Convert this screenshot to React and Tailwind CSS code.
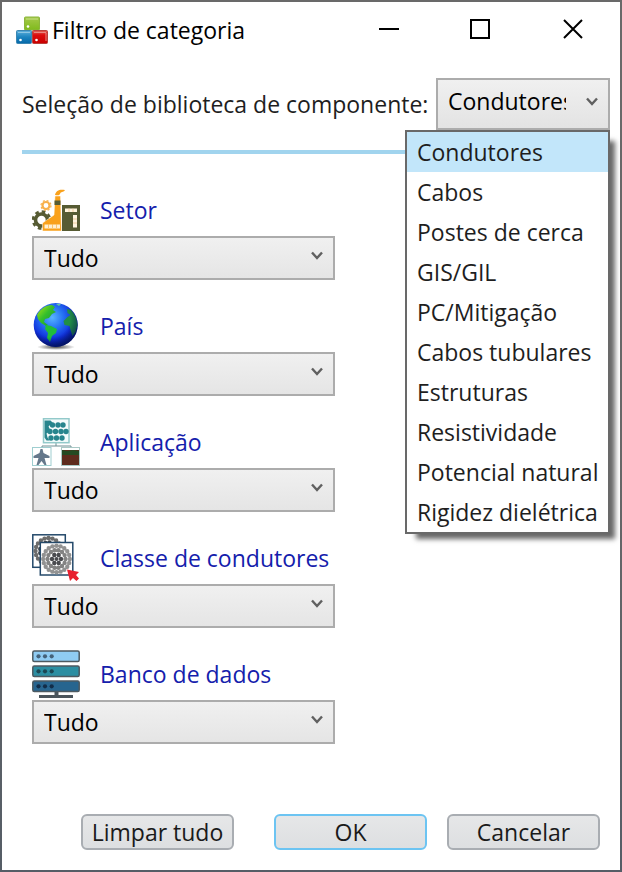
import { useState } from 'react';

const libraries = [
  'Condutores',
  'Cabos',
  'Postes de cerca',
  'GIS/GIL',
  'PC/Mitigação',
  'Cabos tubulares',
  'Estruturas',
  'Resistividade',
  'Potencial natural',
  'Rigidez dielétrica',
];

function BlocksLogo() {
  return (
    <svg className="h-8 w-8 shrink-0" viewBox="0 0 32 32" aria-hidden="true">
      <defs>
        <linearGradient id="lg" x2="0" y2="1">
          <stop stopColor="#a5c94a" />
          <stop offset="1" stopColor="#7fba1c" />
        </linearGradient>
        <linearGradient id="lb" x2="0" y2="1">
          <stop stopColor="#5fb0dc" />
          <stop offset="0.5" stopColor="#1c84c0" />
          <stop offset="1" stopColor="#0668a8" />
        </linearGradient>
        <linearGradient id="lr" x2="0" y2="1">
          <stop stopColor="#e0655a" />
          <stop offset="0.35" stopColor="#dc0d0d" />
          <stop offset="1" stopColor="#c80000" />
        </linearGradient>
      </defs>
      <rect x="8.5" y="3" width="15" height="13" rx="1" fill="url(#lg)" stroke="#8bb53c" />
      <path d="M10 5h12" stroke="#c9df8c" />
      <rect x="0.5" y="16.5" width="15" height="13" rx="1" fill="url(#lb)" stroke="#3b86b2" />
      <path d="M2 18.500h12" stroke="#8cc6e4" />
      <rect x="16.500" y="16.5" width="15" height="13" rx="1" fill="url(#lr)" stroke="#b8403a" />
      <path d="M18 18.500h12M30 19v8" stroke="#e88a82" />
      <g fill="#fff">
        <circle cx="12" cy="12.500" r="1.300" />
        <circle cx="4.500" cy="26" r="1.300" />
        <circle cx="20.500" cy="26" r="1.300" />
      </g>
    </svg>
  );
}

function FactoryIcon() {
  return (
    <svg className="h-12 w-12" viewBox="0 0 48 48" aria-hidden="true">
      <circle cx="14" cy="19.500" r="3.500" fill="none" stroke="#f8b04a" strokeWidth="2.200" />
      <circle cx="14" cy="19.500" r="5" fill="none" stroke="#f8b04a" strokeWidth="1.200" strokeDasharray="2 1.930" />
      <circle cx="9.500" cy="34" r="6" fill="none" stroke="#565b33" strokeWidth="3.600" />
      <circle cx="9.500" cy="34" r="8.500" fill="none" stroke="#565b33" strokeWidth="2.600" strokeDasharray="3.600 3.070" />
      <path d="M10.500 45V37l11.500-8 1-19h5.500l1 35z" fill="#f9a11b" stroke="#fff" strokeWidth="0.500" />
      <path d="M22.500 14.500h6V19h-6z" fill="#565b33" />
      <path d="M23 9c1-5 5-6 10-5-2 3-4 1-5 4-1 2-3 1-5 1z" fill="#f9a11b" />
      <path d="M30 19h18v26H30z" fill="#565b33" />
      <path d="M33 22.500h12V26H33zM41 29h4v12.500h-4z" fill="#fff4df" />
      <path d="M37 22.500v3.500M41 22.500v3.500M41 33h4M41 37h4" stroke="#ecc690" strokeWidth="0.800" />
      <path d="M12.500 38.500h15.500V42.500H12.500z" fill="#fff0d2" />
      <path d="M16.500 38v4M20.500 38v4M24.500 38v4" stroke="#f9b957" strokeWidth="0.800" />
    </svg>
  );
}

function GlobeIcon() {
  return (
    <svg className="h-12 w-12" viewBox="0 0 48 48" aria-hidden="true">
      <defs>
        <radialGradient id="sea" cx="0.420" cy="0.330" r="0.700">
          <stop stopColor="#58b4ff" />
          <stop offset="0.350" stopColor="#2674f4" />
          <stop offset="0.700" stopColor="#102fdc" />
          <stop offset="1" stopColor="#061378" />
        </radialGradient>
        <radialGradient id="shade" cx="0.400" cy="0.350" r="0.650">
          <stop offset="0.650" stopColor="#001050" stopOpacity="0" />
          <stop offset="1" stopColor="#001050" stopOpacity="0.600" />
        </radialGradient>
        <radialGradient id="floor">
          <stop stopColor="#333" stopOpacity="0.900" />
          <stop offset="1" stopColor="#333" stopOpacity="0" />
        </radialGradient>
        <linearGradient id="land" x2="1" y2="1">
          <stop stopColor="#b6e813" />
          <stop offset="0.450" stopColor="#35bf2c" />
          <stop offset="1" stopColor="#108e35" />
        </linearGradient>
      </defs>
      <ellipse cx="24" cy="45" rx="19" ry="3" fill="url(#floor)" />
      <circle cx="23.700" cy="23" r="22" fill="url(#sea)" />
      <path d="M5 13C8 7 14 3 20 3l3 2-2 3 3 2-4 2-3 4-4 1-1 3 4 3-2 1-5-3-3-4z" fill="url(#land)" />
      <path d="M14 23l5 1 6 3-1 4-4 3-2 6-3-4 1-5-3-4z" fill="#20bd3b" />
      <path d="M35 7l4 1c4 4 6 9 6.500 15l-2 7-3 4-2-6-1-4-5-1-1-4 4-4 3-2-3-2z" fill="#218f45" />
      <path d="M24 2l5 0-2 2z" fill="#5fc6a0" />
      <circle cx="23.700" cy="23" r="22" fill="url(#shade)" />
    </svg>
  );
}

function ApplicationIcon() {
  const dots = [
    [20.500, 7], [26, 7], [31, 7],
    [18, 13.500], [23.500, 13.500], [29, 13.500], [34, 13.500],
    [19, 20], [24.500, 20], [30, 20],
  ];
  return (
    <svg className="h-12 w-12" viewBox="0 0 48 48" aria-hidden="true">
      <path d="M24 25v3M10 31v-3h29v3" fill="none" stroke="#6f8e93" />
      <rect x="11.500" y="0.700" width="25.500" height="24" fill="#f3fbfb" stroke="#93c9ca" strokeWidth="1.500" />
      <path d="M12.500 2.500h6l2 2-4 4 2 4-4 3 1 4 2 3h-3l-2-3z" fill="#27858d" />
      {dots.map(([x, y]) => (
        <circle key={`${x}-${y}`} cx={x} cy={y} r="2.700" fill="#27858d" />
      ))}
      <rect x="0.500" y="29.500" width="18.500" height="18" fill="#fff" stroke="#9fced0" />
      <path d="M8.500 31h2l1 4 6 3v2h-5l2 7h-2l-3-4-3 4h-2l2-7h-5v-2l6-3z" fill="#65788b" />
      <rect x="29.500" y="29.500" width="18" height="18" fill="#5e2b1d" stroke="#a9c9c6" />
      <path d="M30 30h17v2H30z" fill="#fff" />
      <path d="M30 32l5 1 6-1 6 1v4H30z" fill="#244a22" />
    </svg>
  );
}

/* Each ring of strands is a dotted circle: zero-length dashes with round caps. */
function Strands({ cx, cy, rings }) {
  return (
    <g fill="none" strokeWidth="4.400" strokeLinecap="round">
      {rings.map(({ r, n, color }) => (
        <circle key={r} cx={cx} cy={cy} r={r} pathLength={n} strokeDasharray="0 1" stroke={color} />
      ))}
    </g>
  );
}

function ConductorClassIcon() {
  return (
    <svg className="h-12 w-12" viewBox="0 0 48 48" aria-hidden="true">
      <rect x="0.800" y="0.800" width="32.500" height="32.500" fill="#fff" stroke="#24496a" strokeWidth="1.500" />
      <Strands
        cx={16.5}
        cy={17}
        rings={[
          { r: 13, n: 20, color: '#6c6c6c' },
          { r: 8.5, n: 13, color: '#3f4246' },
        ]}
      />
      <rect x="8.300" y="8.500" width="32.500" height="32.500" fill="#fff" stroke="#24496a" strokeWidth="1.500" />
      <Strands
        cx={24.5}
        cy={25}
        rings={[
          { r: 13.3, n: 20, color: '#929292' },
          { r: 9, n: 14, color: '#838383' },
          { r: 4.5, n: 6, color: '#4a4b4f' },
        ]}
      />
      <circle cx="24.500" cy="25" r="2.100" fill="#4a4b4f" />
      <path d="M35 35.500l12 2.500-3 3 3 3.500-2.500 2.500-3.500-3-3 3z" fill="#e8202f" />
    </svg>
  );
}

function ServerIcon() {
  const tiers = [
    { y: 1, fill: '#8fccf3', dot: '#44627a' },
    { y: 16, fill: '#2c8ea2', dot: '#1c4754' },
    { y: 31, fill: '#27658f', dot: '#122d49' },
  ];
  return (
    <svg className="h-12 w-12" viewBox="0 0 48 48" aria-hidden="true">
      <path d="M22.500 41h4v4h-4z" fill="#4b555c" />
      <path d="M7 45h34v3H7z" fill="#4b555c" />
      {tiers.map(({ y, fill, dot }) => (
        <g key={y}>
          <rect x="0.800" y={y} width="46.400" height="10.500" rx="1.500" fill={fill} stroke="#4d5a61" strokeWidth="1.500" />
          <g fill={dot}>
            <circle cx="6.500" cy={y + 5.3} r="2.100" />
            <circle cx="13" cy={y + 5.3} r="2.100" />
            <circle cx="19.700" cy={y + 5.3} r="2.100" />
          </g>
        </g>
      ))}
    </svg>
  );
}

function Chevron({ className }) {
  return (
    <svg className={`pointer-events-none absolute h-3 w-3 ${className}`} viewBox="0 0 12 12" aria-hidden="true">
      <path d="M1 2.500L6 8l5-5.500" fill="none" stroke="#606060" strokeWidth="2.400" />
    </svg>
  );
}

const filters = [
  { id: 'setor', label: 'Setor', Icon: FactoryIcon },
  { id: 'pais', label: 'País', Icon: GlobeIcon },
  { id: 'aplicacao', label: 'Aplicação', Icon: ApplicationIcon },
  { id: 'classe', label: 'Classe de condutores', Icon: ConductorClassIcon },
  { id: 'banco', label: 'Banco de dados', Icon: ServerIcon },
];

function FilterField({ id, label, Icon }) {
  return (
    <div>
      <div className="mb-0.5 flex h-12 items-center gap-5">
        <Icon />
        <label htmlFor={id} className="text-[#1420ac]">{label}</label>
      </div>
      <div className="relative">
        <select
          id={id}
          className="block h-11 w-full appearance-none border-2 border-[#acacac] bg-linear-to-b from-[#f0f0f0] to-[#e5e5e5] pr-10 pl-2.5 text-black"
        >
          <option>Tudo</option>
        </select>
        <Chevron className="top-3.5 right-3" />
      </div>
    </div>
  );
}

function DialogButton({ children, primary }) {
  return (
    <button
      type="button"
      className={`h-9 w-[153px] rounded-md border-2 bg-linear-to-b from-[#e6e7e8] to-[#dddfe1] leading-8 text-[#1a1a1a] ${
        primary ? 'border-[#6cc4f2]' : 'border-[#a9adb2]'
      }`}
    >
      {children}
    </button>
  );
}

export default function App() {
  const [library, setLibrary] = useState(libraries[0]);

  return (
    <div className="min-h-screen bg-linear-to-b from-[#696969] from-50% to-[#555d66] p-0.5 font-['Open_Sans','Noto_Sans',sans-serif] text-[23px] text-[#1e1e1e]">
      <main className="flex min-h-[calc(100vh-4px)] flex-col bg-white">
        <header className="flex h-14 items-center pr-9 pl-3.5">
          <BlocksLogo />
          <h1 className="ml-1 flex-1 text-black">Filtro de categoria</h1>
          <div className="flex items-center gap-[70px] text-black">
            <button type="button" aria-label="Minimizar">
              <svg className="h-[22px] w-[22px]" viewBox="0 0 22 22"><path d="M1 10h20" stroke="currentColor" strokeWidth="2" /></svg>
            </button>
            <button type="button" aria-label="Maximizar">
              <svg className="h-[22px] w-[22px]" viewBox="0 0 22 22"><path d="M1 1h18v18H1z" fill="none" stroke="currentColor" strokeWidth="2" /></svg>
            </button>
            <button type="button" aria-label="Fechar">
              <svg className="h-[22px] w-[22px]" viewBox="0 0 22 22"><path d="M2 1l18 18M20 1L2 19" stroke="currentColor" strokeWidth="2" /></svg>
            </button>
          </div>
        </header>

        <div className="mt-5 flex items-center justify-between pr-2.5 pl-5">
          <label htmlFor="biblioteca" className="whitespace-nowrap">
            Seleção de biblioteca de componente:
          </label>
          <div className="relative">
            <select
              id="biblioteca"
              value={library}
              onChange={(e) => setLibrary(e.target.value)}
              className="block h-[52px] w-[174px] appearance-none border-2 border-[#acacac] bg-linear-to-b from-[#f0f0f0] to-[#e3e3e3] pr-[42px] pb-1.5 pl-2.5 text-black"
            >
              {libraries.map((name) => (
                <option key={name}>{name}</option>
              ))}
            </select>
            <Chevron className="top-[18px] right-3" />
            <ul
              role="listbox"
              aria-label="Bibliotecas"
              className="absolute top-full right-0 z-10 w-[205px] border-2 border-[#696969] bg-white shadow-[8px_8px_5px_-3px_rgba(0,0,0,0.6)]"
            >
              {libraries.map((name) => (
                <li
                  key={name}
                  role="option"
                  aria-selected={name === library}
                  onClick={() => setLibrary(name)}
                  className={`h-10 pl-2.5 leading-10 whitespace-nowrap ${name === library ? 'bg-[#c2e6fa]' : ''}`}
                >
                  {name}
                </li>
              ))}
            </ul>
          </div>
        </div>

        <hr className="mx-5 mt-5 border-0 border-t-4 border-[#a1d4ee]" />

        <form className="mt-8 ml-[30px] flex w-[303px] flex-col gap-[22px]">
          {filters.map((f) => (
            <FilterField key={f.id} {...f} />
          ))}
        </form>

        <footer className="mt-auto flex justify-end gap-5 pr-5 pb-5">
          <div className="mr-5">
            <DialogButton>Limpar tudo</DialogButton>
          </div>
          <DialogButton primary>OK</DialogButton>
          <DialogButton>Cancelar</DialogButton>
        </footer>
      </main>
    </div>
  );
}
